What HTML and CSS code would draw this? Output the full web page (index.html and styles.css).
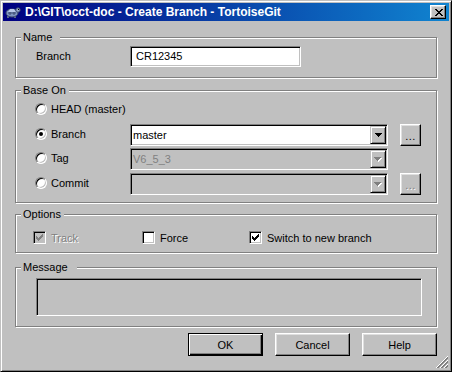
FILE: index.html
```html
<!DOCTYPE html>
<html>
<head>
<meta charset="utf-8">
<link rel="stylesheet" href="styles.css">
</head>
<body>
<div class="window">
  <div class="titlebar">
    <svg class="app-icon" width="16" height="16" viewBox="0 0 16 16">
      <path d="M2 12h2v2H2zM9 12h2v2H9z" fill="#5a6a8a"/>
      <ellipse cx="7" cy="9" rx="6" ry="4" fill="#7f95c0" stroke="#3c4a6e"/>
      <path d="M3 8l2-3h4l2 3z" fill="#b8c8e8"/>
      <path d="M5 8v3M9 8v3M3 9h8" stroke="#3c4a6e" fill="none"/>
      <circle cx="13" cy="6" r="2.2" fill="#9aacce" stroke="#3c4a6e"/>
      <rect x="13" y="5" width="1" height="1" fill="#000"/>
    </svg>
    <span class="title">D:\GIT\occt-doc - Create Branch - TortoiseGit</span>
    <div class="close">
      <svg width="8" height="7" viewBox="0 0 8 7"><path d="M0 0h2v1h-2zM6 0h2v1h-2zM1 1h2v1h-2zM5 1h2v1h-2zM2 2h4v1h-4zM3 3h2v1h-2zM2 4h4v1h-4zM1 5h2v1h-2zM5 5h2v1h-2zM0 6h2v1h-2zM6 6h2v1h-2z" fill="#000"/></svg>
    </div>
  </div>

  <div class="client">
    <div class="group g-name">
      <span class="legend legend-name">Name</span>
      <div class="name-row">
        <span class="name-label">Branch</span>
        <div class="edit name-edit">CR12345</div>
      </div>
    </div>

    <div class="group g-base">
      <span class="legend">Base On</span>
      <div class="row row-head">
        <div class="choice"><span class="radio"></span><span>HEAD (master)</span></div>
      </div>
      <div class="row row-branch">
        <div class="choice"><span class="radio checked"></span><span>Branch</span></div>
        <div class="combo">
          <span class="combo-text">master</span>
          <span class="drop"><svg width="7" height="4" viewBox="0 0 7 4"><path d="M0 0h7v1h-1v1h-1v1h-1v1h-1v-1h-1v-1h-1v-1h-1z" fill="#000"/></svg></span>
        </div>
        <div class="btn dots">...</div>
      </div>
      <div class="row row-tag">
        <div class="choice"><span class="radio"></span><span>Tag</span></div>
        <div class="combo disabled">
          <span class="combo-text">V6_5_3</span>
          <span class="drop"><svg width="8" height="5" viewBox="0 0 8 5"><path d="M1 1h7v1h-1v1h-1v1h-1v1h-1v-1h-1v-1h-1v-1h-1z" fill="#fff"/><path d="M0 0h7v1h-1v1h-1v1h-1v1h-1v-1h-1v-1h-1v-1h-1z" fill="#808080"/></svg></span>
        </div>
      </div>
      <div class="row row-commit">
        <div class="choice"><span class="radio"></span><span>Commit</span></div>
        <div class="combo disabled">
          <span class="combo-text"></span>
          <span class="drop"><svg width="8" height="5" viewBox="0 0 8 5"><path d="M1 1h7v1h-1v1h-1v1h-1v1h-1v-1h-1v-1h-1v-1h-1z" fill="#fff"/><path d="M0 0h7v1h-1v1h-1v1h-1v1h-1v-1h-1v-1h-1v-1h-1z" fill="#808080"/></svg></span>
        </div>
        <div class="btn dots disabled-text">...</div>
      </div>
    </div>

    <div class="group g-options">
      <span class="legend">Options</span>
      <div class="opts">
        <div class="opt opt-track">
          <span class="check disabled"><svg width="7" height="7" viewBox="0 0 7 7"><path d="M6 0h1v1h-1zM5 1h2v1h-2zM0 2h1v1h-1zM4 2h3v1h-3zM0 3h2v1h-2zM3 3h3v1h-3zM0 4h5v1h-5zM1 5h3v1h-3zM2 6h1v1h-1z" fill="#808080"/></svg></span>
          <span class="disabled-text">Track</span>
        </div>
        <div class="opt opt-force">
          <span class="check"></span>
          <span>Force</span>
        </div>
        <div class="opt">
          <span class="check"><svg width="7" height="7" viewBox="0 0 7 7"><path d="M6 0h1v1h-1zM5 1h2v1h-2zM0 2h1v1h-1zM4 2h3v1h-3zM0 3h2v1h-2zM3 3h3v1h-3zM0 4h5v1h-5zM1 5h3v1h-3zM2 6h1v1h-1z" fill="#000"/></svg></span>
          <span>Switch to new branch</span>
        </div>
      </div>
    </div>

    <div class="group g-message">
      <span class="legend legend-message">Message</span>
      <div class="edit msg-edit"></div>
    </div>

    <div class="buttons">
      <div class="btn push default">OK</div>
      <div class="btn push">Cancel</div>
      <div class="btn push">Help</div>
    </div>
  </div>

  <svg class="grip" width="12" height="12" viewBox="0 0 12 12">
    <line x1="12" y1="0" x2="0" y2="12" stroke="#fff"/>
    <line x1="12" y1="1" x2="1" y2="12" stroke="#808080"/>
    <line x1="12" y1="2" x2="2" y2="12" stroke="#808080"/>
    <line x1="12" y1="4" x2="4" y2="12" stroke="#fff"/>
    <line x1="12" y1="5" x2="5" y2="12" stroke="#808080"/>
    <line x1="12" y1="6" x2="6" y2="12" stroke="#808080"/>
    <line x1="12" y1="8" x2="8" y2="12" stroke="#fff"/>
    <line x1="12" y1="9" x2="9" y2="12" stroke="#808080"/>
    <line x1="12" y1="10" x2="10" y2="12" stroke="#808080"/>
  </svg>
</div>
</body>
</html>
```

FILE: styles.css
```css
html, body {
  margin: 0;
  padding: 0;
  background: #c0c0c0;
}

.window {
  position: relative;
  width: 452px;
  height: 372px;
  box-sizing: border-box;
  border: 1px solid;
  border-color: #c0c0c0 #000 #000 #c0c0c0;
  box-shadow: inset 1px 1px #fff, inset -1px -1px #808080;
  padding: 2px;
  background: #c0c0c0;
  display: flex;
  flex-direction: column;
  font: 11px "Liberation Sans", Arial, sans-serif;
  color: #000;
}

.titlebar {
  flex-shrink: 0;
  height: 18px;
  display: flex;
  align-items: center;
  padding: 0 3px 0 2px;
  background: linear-gradient(to right, #000080, #1084d0);
  color: #fff;
}

.app-icon {
  flex-shrink: 0;
  display: block;
}

.title {
  flex: 1;
  margin-left: 4px;
  font-weight: bold;
  font-size: 12px;
  white-space: nowrap;
  line-height: 18px;
}

.close {
  width: 16px;
  height: 14px;
  box-sizing: border-box;
  background: #c0c0c0;
  border: 1px solid;
  border-color: #fff #000 #000 #fff;
  box-shadow: inset -1px -1px #808080, inset 1px 1px #dfdfdf;
  display: flex;
  align-items: center;
  justify-content: center;
  padding-left: 1px;
}

.close svg {
  display: block;
}

.client {
  flex: 1;
  display: flex;
  flex-direction: column;
  padding: 16px 12px 0;
}

.group {
  flex-shrink: 0;
  box-sizing: border-box;
  border: 1px solid #808080;
  box-shadow: inset 1px 1px #fff, 1px 1px #fff;
}

.legend {
  display: block;
  width: max-content;
  margin: -7px 0 0 5px;
  padding: 0 3px 0 2px;
  line-height: 13px;
  height: 13px;
  background: #c0c0c0;
}

.legend-name {
  padding-right: 8px;
}

.legend-message {
  padding-right: 9px;
}

/* Name */
.g-name {
  height: 41px;
}

.name-row {
  display: flex;
  align-items: center;
  margin-top: 2px;
  padding-left: 20px;
  height: 21px;
}

.name-label {
  width: 94px;
  margin-top: -1px;
}

.edit {
  box-sizing: border-box;
  border: 1px solid;
  border-color: #808080 #fff #fff #808080;
  box-shadow: inset 1px 1px #000, inset -1px -1px #c0c0c0;
  background: #fff;
}

.name-edit {
  width: 171px;
  height: 21px;
  line-height: 19px;
  padding-left: 5px;
}

/* Base On */
.g-base {
  margin-top: 12px;
  height: 113px;
}

.row {
  display: flex;
  align-items: center;
  padding-left: 19px;
  height: 22px;
}

.row-head {
  margin-top: 2px;
  height: 21px;
}

.row-branch {
  margin-top: 4px;
}

.row-tag {
  margin-top: 2px;
}

.row-commit {
  margin-top: 3px;
}

.choice {
  width: 95px;
  display: flex;
  align-items: center;
  gap: 4px;
  margin-top: -2px;
}

.radio {
  width: 12px;
  height: 12px;
  box-sizing: border-box;
  border-radius: 50%;
  border: 1px solid;
  border-color: #808080 #fff #fff #808080;
  box-shadow: inset 1px 1px #000, inset -1px -1px #c0c0c0;
  background: #fff;
  display: flex;
  align-items: center;
  justify-content: center;
}

.radio.checked::after {
  content: "";
  width: 4px;
  height: 4px;
  border-radius: 50%;
  background: #000;
}

.combo {
  width: 258px;
  height: 22px;
  box-sizing: border-box;
  border: 1px solid;
  border-color: #808080 #fff #fff #808080;
  box-shadow: inset 1px 1px #000, inset -1px -1px #c0c0c0;
  background: #fff;
  padding: 1px;
  display: flex;
  align-items: stretch;
  margin-right: 12px;
}

.combo.disabled {
  background: #c0c0c0;
}

.combo-text {
  flex: 1;
  padding-left: 1px;
  line-height: 18px;
}

.combo.disabled .combo-text {
  color: #808080;
}

.drop {
  width: 16px;
  box-sizing: border-box;
  background: #c0c0c0;
  border: 1px solid;
  border-color: #c0c0c0 #000 #000 #c0c0c0;
  box-shadow: inset 1px 1px #fff, inset -1px -1px #808080;
  display: flex;
  align-items: center;
  justify-content: center;
}

.drop svg {
  display: block;
}

.btn {
  box-sizing: border-box;
  background: #c0c0c0;
  border: 1px solid;
  border-color: #fff #000 #000 #fff;
  box-shadow: inset -1px -1px #808080, inset 1px 1px #dfdfdf;
  display: flex;
  align-items: center;
  justify-content: center;
}

.dots {
  width: 21px;
  height: 22px;
  line-height: 1;
  padding-top: 2px;
  letter-spacing: 0.5px;
}

.disabled-text {
  color: #808080;
  text-shadow: 1px 1px #fff;
}

/* Options */
.g-options {
  margin-top: 11px;
  height: 39px;
}

.opts {
  display: flex;
  align-items: center;
  margin-top: 10px;
  padding-left: 17px;
  height: 13px;
}

.opt {
  display: flex;
  align-items: center;
  gap: 5px;
}

.opt-track {
  width: 109px;
}

.opt-force {
  width: 107px;
}

.check {
  width: 13px;
  height: 13px;
  box-sizing: border-box;
  border: 1px solid;
  border-color: #808080 #fff #fff #808080;
  box-shadow: inset 1px 1px #000, inset -1px -1px #c0c0c0;
  background: #fff;
  display: flex;
  align-items: center;
  justify-content: center;
}

.check.disabled {
  background: #c0c0c0;
}

.check svg {
  display: block;
}

/* Message */
.g-message {
  margin-top: 14px;
  height: 60px;
}

.msg-edit {
  margin: 4px 14px 0 20px;
  height: 38px;
  background: #c0c0c0;
}

/* Buttons */
.buttons {
  display: flex;
  justify-content: flex-end;
  gap: 12px;
  margin-top: 6px;
}

.push {
  width: 75px;
  height: 23px;
}

.push.default {
  border: 1px solid #000;
  box-shadow: inset 1px 1px #fff, inset -1px -1px #000, inset -2px -2px #808080;
}

.grip {
  position: absolute;
  right: 3px;
  bottom: 3px;
  display: block;
}
```
